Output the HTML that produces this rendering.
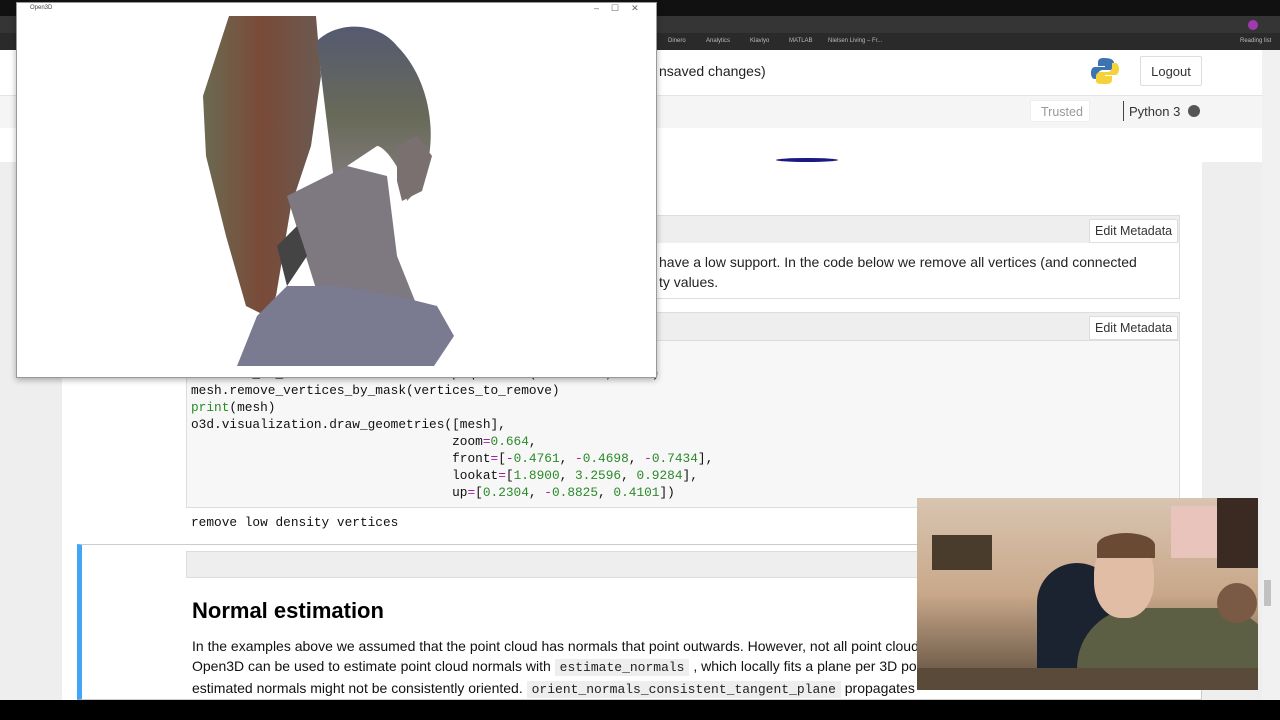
<!DOCTYPE html>
<html><head><meta charset="utf-8"><style>
*{margin:0;padding:0;box-sizing:border-box}
body{width:1280px;height:720px;overflow:hidden;position:relative;background:#eeeeee;font-family:"Liberation Sans",sans-serif}
.a{position:absolute}
.mono{font-family:"Liberation Mono",monospace;font-size:12.8px;color:#111}
.btn{position:absolute;background:#fff;border:1px solid #ddd;font-size:12.5px;color:#333;padding:6px 5px;border-radius:2px}
.g{color:#2a8a2a}.p{color:#a020a0}
code{font-family:"Liberation Mono",monospace;font-size:13px;background:#eee;padding:1px 5px;color:#222}
</style></head><body>
<div class="a" style="left:0;top:0;width:1280px;height:16px;background:#111"></div>
<div class="a" style="left:0;top:16px;width:1280px;height:17px;background:#353535"></div>
<div class="a" style="left:0;top:33px;width:1280px;height:17px;background:#2a2a2a;color:#bbb;font-size:6px;white-space:nowrap">
<span class="a" style="left:668px;top:5px">Dinero</span><span class="a" style="left:706px;top:5px">Analytics</span><span class="a" style="left:750px;top:5px">Klaviyo</span><span class="a" style="left:789px;top:5px">MATLAB</span><span class="a" style="left:828px;top:5px">Nielsen Living – Fr...</span><span class="a" style="left:1240px;top:5px">Reading list</span></div>
<div class="a" style="left:1248px;top:20px;width:10px;height:10px;border-radius:50%;background:#a03ab0"></div>
<div class="a" style="left:0;top:50px;width:1262px;height:45px;background:#fff"></div>
<div class="a" style="left:659px;top:63px;font-size:14px;color:#222">nsaved changes)</div>
<svg class="a" style="left:1091px;top:57px" width="28" height="28" viewBox="0 0 28 28"><path d="M13 1c-6 0-6 3-6 5v3h7v1H4c-3 0-4 3-4 6s1 6 4 6h3v-4c0-3 2-5 5-5h7c2 0 4-2 4-4V6c0-3-3-5-10-5z" fill="#3b74b0"/><path d="M15 27c6 0 6-3 6-5v-3h-7v-1h10c3 0 4-3 4-6s-1-6-4-6h-3v4c0 3-2 5-5 5H9c-2 0-4 2-4 4v5c0 3 3 3 10 3z" fill="#f5d23c"/></svg>
<div class="btn" style="left:1140px;top:56px;width:62px;height:30px;font-size:13px;text-align:center;padding-top:7px">Logout</div>
<div class="a" style="left:0;top:95px;width:1262px;height:33px;background:#f5f5f5;border-top:1px solid #e4e4e4"></div>
<div class="a" style="left:1030px;top:100px;width:60px;height:22px;background:#fff;border:1px solid #eee;color:#999;font-size:12.5px;padding:4px 10px">Trusted</div>
<div class="a" style="left:1123px;top:101px;width:1px;height:20px;background:#444"></div>
<div class="a" style="left:1129px;top:104px;font-size:13px;color:#333">Python 3</div>
<div class="a" style="left:1188px;top:105px;width:12px;height:12px;border-radius:50%;background:#555"></div>
<div class="a" style="left:0;top:128px;width:1262px;height:34px;background:#fff"></div>
<div class="a" style="left:776px;top:158px;width:62px;height:4px;border-radius:50%;background:#1a1a80"></div>
<div class="a" style="left:1262px;top:50px;width:18px;height:650px;background:#f1f1f1"></div>
<div class="a" style="left:1264px;top:580px;width:7px;height:26px;background:#c1c1c1"></div>
<div class="a" style="left:62px;top:162px;width:1140px;height:538px;background:#fff"></div>
<div class="a" style="left:186px;top:215px;width:994px;height:84px;border:1px solid #ddd"></div>
<div class="a" style="left:187px;top:216px;width:992px;height:27px;background:#eee"></div>
<div class="btn" style="left:1089px;top:219px;padding:4px 5px">Edit Metadata</div>
<div class="a" style="left:659px;top:252px;font-size:14px;color:#222;line-height:20px">have a low support. In the code below we remove all vertices (and connected<br>ty values.</div>
<div class="a" style="left:186px;top:312px;width:994px;height:196px;border:1px solid #ddd;background:#f7f7f7"></div>
<div class="a" style="left:187px;top:313px;width:992px;height:28px;background:#eee;border-bottom:1px solid #ddd"></div>
<div class="btn" style="left:1089px;top:316px;padding:4px 5px">Edit Metadata</div>
<pre class="a mono" style="left:191px;top:365px;line-height:17px">vertices_to_remove = densities &lt; np.quantile(densities, 0.01)
mesh.remove_vertices_by_mask(vertices_to_remove)
<span class="g">print</span>(mesh)
o3d.visualization.draw_geometries([mesh],
                                  zoom<span class="p">=</span><span class="g">0.664</span>,
                                  front<span class="p">=</span>[<span class="p">-</span><span class="g">0.4761</span>, <span class="p">-</span><span class="g">0.4698</span>, <span class="p">-</span><span class="g">0.7434</span>],
                                  lookat<span class="p">=</span>[<span class="g">1.8900</span>, <span class="g">3.2596</span>, <span class="g">0.9284</span>],
                                  up<span class="p">=</span>[<span class="g">0.2304</span>, <span class="p">-</span><span class="g">0.8825</span>, <span class="g">0.4101</span>])</pre>
<div class="a mono" style="left:191px;top:515px">remove low density vertices</div>
<div class="a" style="left:77px;top:544px;width:1125px;height:156px;border:1px solid #ccc;border-left:5px solid #42a5f5"></div>
<div class="a" style="left:186px;top:551px;width:994px;height:27px;background:#eee;border:1px solid #ddd"></div>
<div class="a" style="left:192px;top:598px;font-size:22px;font-weight:bold;color:#000">Normal estimation</div>
<div class="a" style="left:192px;top:636px;font-size:14px;color:#111;line-height:20px;white-space:nowrap">In the examples above we assumed that the point cloud has normals that point outwards. However, not all point clouds<br>Open3D can be used to estimate point cloud normals with <code>estimate_normals</code> , which locally fits a plane per 3D point<br>estimated normals might not be consistently oriented. <code>orient_normals_consistent_tangent_plane</code> propagates</div>
<div class="a" style="left:16px;top:2px;width:641px;height:376px;background:#fff;border:1px solid #999;box-shadow:0 2px 6px rgba(0,0,0,.3)"></div>
<div class="a" style="left:30px;top:5px;font-size:6px;color:#444">Open3D</div>
<div class="a" style="left:594px;top:3px;font-size:9px;color:#666;letter-spacing:12px">–☐✕</div>
<svg class="a" style="left:17px;top:16px" width="640" height="361" viewBox="0 0 640 361">
<defs><linearGradient id="w" x1="0" x2="1"><stop offset="0" stop-color="#6b6a52"/><stop offset=".5" stop-color="#7a4a38"/><stop offset="1" stop-color="#6a5a52"/></linearGradient>
<linearGradient id="h" x1="0" y1="0" x2="0" y2="1"><stop offset="0" stop-color="#555a70"/><stop offset=".5" stop-color="#686a58"/><stop offset="1" stop-color="#8a8088"/></linearGradient></defs>
<path d="M212 0h87l5 60-10 70-20 60-15 90-10 20-20-10-20-70-20-80-3-60z" fill="url(#w)"/>
<path d="M300 25c20-20 60-20 80 5 30 30 40 80 30 120-5 20-15 30-20 35l-5-25c-10-20-20-30-25-30l-30 20-10 40z" fill="url(#h)"/>
<path d="M270 180l60-30 40 10 10 80 20 50 20 30-30 20-70 0z" fill="#7e7880"/>
<path d="M240 300l30-30 50 0 60 10 40 10 17 30-20 30H220z" fill="#7a7a90"/>
<path d="M260 230l20-20 10 30-20 30z" fill="#444"/>
<path d="M380 130l20-10 15 20-10 35-20 10-5-20z" fill="#7a7070"/>
</svg>
<div class="a" style="left:917px;top:498px;width:341px;height:192px;background:linear-gradient(#d8c4b0,#c9a88a 50%,#5a4a3a);overflow:hidden">
<div class="a" style="left:15px;top:37px;width:60px;height:35px;background:#4a3c2c"></div>
<div class="a" style="left:254px;top:8px;width:63px;height:52px;background:#e8c4bc"></div>
<div class="a" style="left:300px;top:0;width:41px;height:70px;background:#3a2a22"></div>
<div class="a" style="left:120px;top:65px;width:80px;height:110px;border-radius:40px 40px 0 0;background:#1b2230"></div>
<div class="a" style="left:160px;top:110px;width:200px;height:90px;border-radius:60px 60px 0 0;background:#5d5f44"></div>
<div class="a" style="left:177px;top:40px;width:60px;height:80px;border-radius:45%;background:#e2bda5"></div>
<div class="a" style="left:180px;top:35px;width:58px;height:25px;border-radius:50% 50% 0 0;background:#6a4a35"></div>
<div class="a" style="left:300px;top:85px;width:40px;height:40px;border-radius:50%;background:#7a5a45"></div>
<div class="a" style="left:0;top:170px;width:341px;height:22px;background:#5a4a3a"></div>
</div>
<div class="a" style="left:0;top:700px;width:1280px;height:20px;background:#000"></div>
</body></html>
